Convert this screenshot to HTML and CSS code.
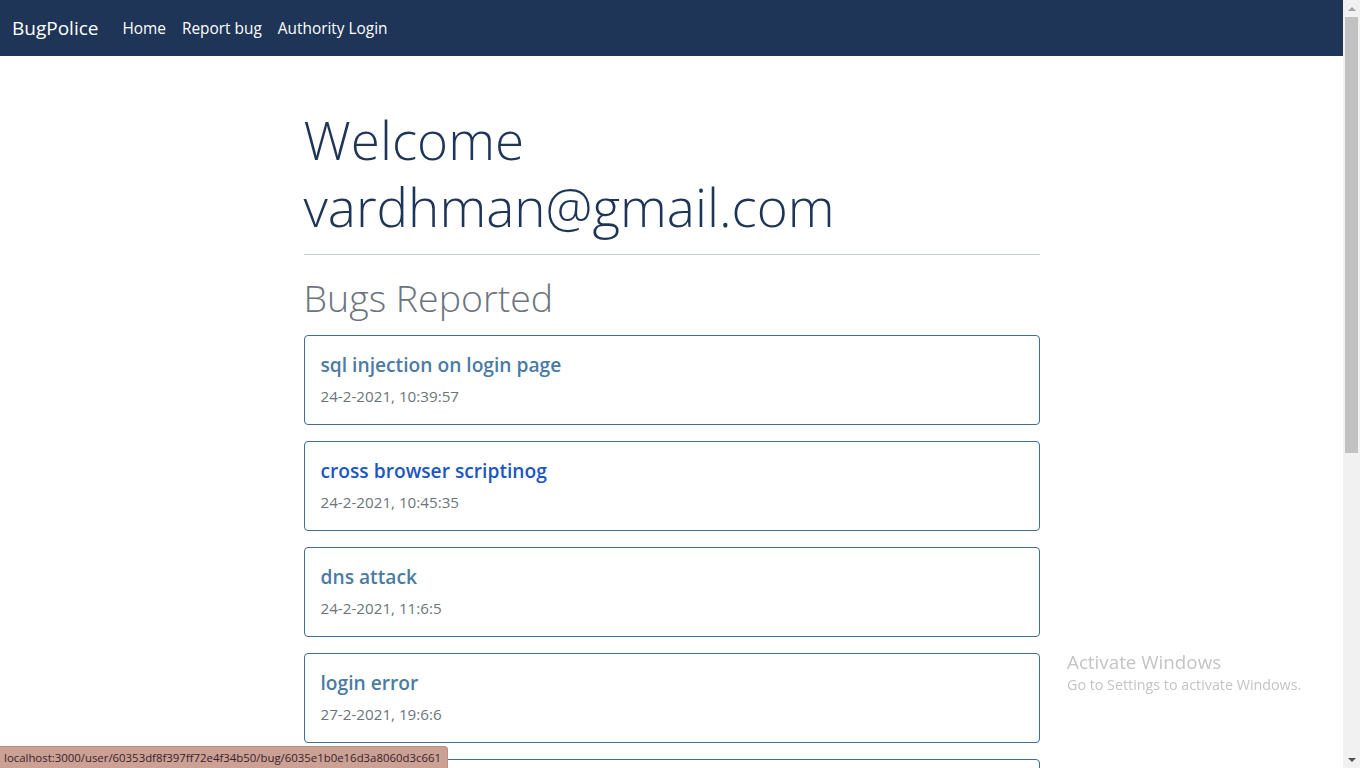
FILE: index.html
```html
<!DOCTYPE html>
<html lang="en">
<head>
<meta charset="utf-8">
<title>BugPolice</title>
<link rel="stylesheet" href="styles.css">
</head>
<body>
<div class="viewport">
  <div class="page">
    <nav class="navbar">
      <a class="brand" href="#">BugPolice</a>
      <a class="nav-link" href="#">Home</a>
      <a class="nav-link" href="#">Report bug</a>
      <a class="nav-link" href="#">Authority Login</a>
    </nav>
    <main class="content">
      <h1 class="welcome">Welcome<br>vardhman@gmail.com</h1>
      <hr class="divider">
      <h2 class="section-title">Bugs Reported</h2>
      <div class="bug-list">
        <div class="card"><a class="card-title" href="#">sql injection on login page</a><div class="card-date">24-2-2021, 10:39:57</div></div>
        <div class="card"><a class="card-title hovered" href="#">cross browser scriptinog</a><div class="card-date">24-2-2021, 10:45:35</div></div>
        <div class="card"><a class="card-title" href="#">dns attack</a><div class="card-date">24-2-2021, 11:6:5</div></div>
        <div class="card"><a class="card-title" href="#">login error</a><div class="card-date">27-2-2021, 19:6:6</div></div>
        <div class="card"></div>
      </div>
    </main>
  </div>
  <div class="scrollbar">
    <div class="sb-arrow up"></div>
    <div class="sb-track"><div class="sb-thumb"></div></div>
    <div class="sb-arrow down"></div>
  </div>
</div>
<div class="activate">
  <div class="activate-title">Activate Windows</div>
  <div class="activate-sub">Go to Settings to activate Windows.</div>
</div>
<div class="status">localhost:3000/user/60353df8f397ff72e4f34b50/bug/6035e1b0e16d3a8060d3c661</div>
</body>
</html>
```
FILE: styles.css
```css
html, body {
  margin: 0;
  padding: 0;
  height: 100%;
  overflow: hidden;
}
body {
  font-family: "Open Sans", "Noto Sans", sans-serif;
  color: #212529;
  background: #fff;
}
.viewport {
  display: flex;
  height: 768px;
}
.page {
  flex: 1;
  overflow: hidden;
}
.navbar {
  height: 56px;
  background: #1e3557;
  display: flex;
  align-items: center;
  padding: 0 12px;
  box-sizing: border-box;
}
.navbar a {
  color: #fff;
  text-decoration: none;
}
.brand {
  font-size: 19px;
  margin-right: 16px;
  padding-bottom: 1px;
}
.nav-link {
  font-size: 15.4px;
  padding: 0 8px;
}
.content {
  width: 736px;
  margin: 0 auto;
  padding-top: 50px;
}
.welcome {
  margin: 0;
  font-size: 53px;
  font-weight: 300;
  line-height: 67px;
  color: #1e3557;
}
.divider {
  border: 0;
  border-top: 1px solid #c6ccd6;
  margin: 14px 0 0;
}
.section-title {
  margin: 16px 0 10px;
  font-size: 37.5px;
  font-weight: 300;
  line-height: 54px;
  color: #6c7480;
}
.bug-list {
  display: flex;
  flex-direction: column;
  gap: 16px;
}
.card {
  border: 1px solid #3f6f95;
  border-radius: 4px;
  padding: 16px;
  box-sizing: border-box;
  height: 90px;
}
.card-title {
  display: block;
  font-size: 19.2px;
  font-weight: 600;
  line-height: 26px;
  color: #4a7ba3;
  text-decoration: none;
}
.card-title.hovered {
  color: #1b55c6;
}
.card-date {
  font-size: 15.2px;
  line-height: 24px;
  color: #6c757d;
  margin-top: 6px;
}
.scrollbar {
  width: 17px;
  background: #f1f1f1;
  display: flex;
  flex-direction: column;
}
.sb-arrow {
  height: 17px;
  display: flex;
  align-items: center;
  justify-content: center;
}
.sb-arrow::before {
  content: "";
  width: 0;
  height: 0;
  border-left: 4px solid transparent;
  border-right: 4px solid transparent;
}
.sb-arrow.up::before {
  border-bottom: 4px solid #a3a3a3;
}
.sb-arrow.down::before {
  border-top: 4px solid #505050;
}
.sb-track {
  flex: 1;
  padding: 0 2px;
}
.sb-thumb {
  height: 436px;
  background: #c1c1c1;
}
.activate {
  position: fixed;
  left: 1067px;
  top: 650px;
  color: #c4c4c4;
  font-family: "Open Sans", "Noto Sans", sans-serif;
}
.activate-title {
  font-size: 18.8px;
  line-height: 24px;
}
.activate-sub {
  font-size: 14.3px;
  line-height: 22px;
}
.status {
  position: fixed;
  left: 0;
  bottom: 0;
  height: 21px;
  line-height: 21px;
  padding: 0 6px 0 4px;
  background: #cba196;
  color: #3b1d2a;
  font-size: 11.4px;
  border-top-right-radius: 4px;
  border: 1px solid #b99083;
  border-left: 0;
  border-bottom: 0;
}
```
